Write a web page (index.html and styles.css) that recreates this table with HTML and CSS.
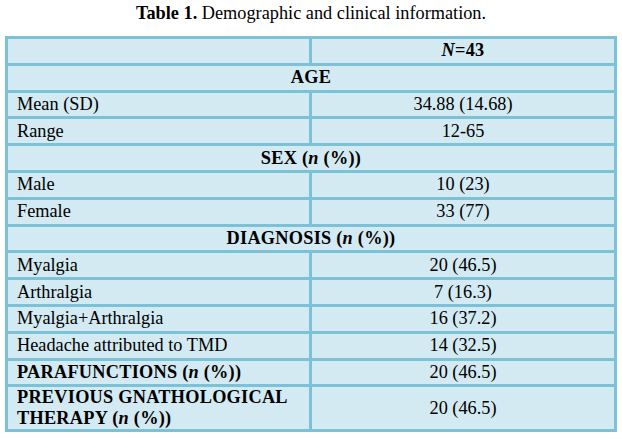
FILE: index.html
```html
<!DOCTYPE html>
<html>
<head>
<meta charset="utf-8">
<link rel="stylesheet" href="styles.css">
</head>
<body>
<div class="page">
  <p class="caption"><b>Table 1.</b> Demographic and clinical information.</p>
  <div class="table">
    <div class="cell"></div>
    <div class="cell num head"><span><i>N</i>=43</span></div>
    <div class="cell span head"><span>AGE</span></div>
    <div class="cell"><span>Mean (SD)</span></div>
    <div class="cell num"><span>34.88 (14.68)</span></div>
    <div class="cell"><span>Range</span></div>
    <div class="cell num"><span>12-65</span></div>
    <div class="cell span head"><span>SEX (<i>n</i> (%))</span></div>
    <div class="cell"><span>Male</span></div>
    <div class="cell num"><span>10 (23)</span></div>
    <div class="cell"><span>Female</span></div>
    <div class="cell num"><span>33 (77)</span></div>
    <div class="cell span head"><span>DIAGNOSIS (<i>n</i> (%))</span></div>
    <div class="cell"><span>Myalgia</span></div>
    <div class="cell num"><span>20 (46.5)</span></div>
    <div class="cell"><span>Arthralgia</span></div>
    <div class="cell num"><span>7 (16.3)</span></div>
    <div class="cell"><span>Myalgia+Arthralgia</span></div>
    <div class="cell num"><span>16 (37.2)</span></div>
    <div class="cell"><span>Headache attributed to TMD</span></div>
    <div class="cell num"><span>14 (32.5)</span></div>
    <div class="cell head"><span>PARAFUNCTIONS (<i>n</i> (%))</span></div>
    <div class="cell num"><span>20 (46.5)</span></div>
    <div class="cell head"><span>PREVIOUS GNATHOLOGICAL THERAPY (<i>n</i> (%))</span></div>
    <div class="cell num"><span>20 (46.5)</span></div>
  </div>
</div>
</body>
</html>
```

FILE: styles.css
```css
html, body {
  margin: 0;
  padding: 0;
  background: #ffffff;
}

body {
  font-family: "Liberation Serif", "Times New Roman", serif;
  font-size: 18.3px;
  line-height: 21px;
  color: #000000;
}

.page {
  width: 622px;
  padding-top: 3px;
}

.caption {
  margin: 0 0 12px 0;
  text-align: center;
}

.table {
  display: grid;
  grid-template-columns: 301px 302px;
  grid-template-rows: repeat(13, 23.8px) 42px;
  gap: 3px;
  padding: 3px;
  margin-left: 5px;
  width: 612px;
  box-sizing: border-box;
  background: #7cc1d5;
}

.cell {
  background: #d3eaf2;
  padding: 0 6px 0 9px;
  display: flex;
  align-items: center;
}

.num {
  justify-content: center;
  padding: 0;
}

.span {
  grid-column: 1 / -1;
  justify-content: center;
  padding: 0;
}

.head {
  font-weight: bold;
  letter-spacing: 0.25px;
}
```
